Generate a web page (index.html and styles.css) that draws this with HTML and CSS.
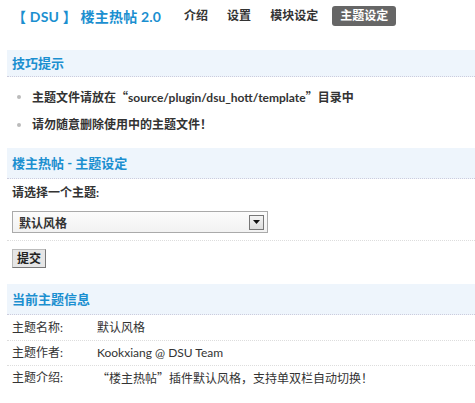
FILE: index.html
```html
<!DOCTYPE html>
<html lang="zh">
<head>
<meta charset="utf-8">
<link rel="stylesheet" href="styles.css">
</head>
<body>
<div class="top">
  <h1 class="brand">【 DSU 】 楼主热帖 2.0</h1>
  <nav class="nav">
    <a class="nav-item first">介绍</a>
    <a class="nav-item">设置</a>
    <a class="nav-item">模块设定</a>
    <a class="nav-item active">主题设定</a>
  </nav>
</div>

<div class="section">
  <div class="sec-head">技巧提示</div>
  <ul class="tips">
    <li>主题文件请放在<span class="q">“</span>source/plugin/dsu_hott/template<span class="q">”</span>目录中</li>
    <li>请勿随意删除使用中的主题文件！</li>
  </ul>
</div>

<div class="section">
  <div class="sec-head head2">楼主热帖 - 主题设定</div>
  <div class="label">请选择一个主题:</div>
  <div class="select-row">
    <div class="select">
      <span class="select-text">默认风格</span>
      <span class="select-btn"><svg width="7" height="4" viewBox="0 0 7 4"><path d="M0 0h7L3.5 4z" fill="#111"/></svg></span>
    </div>
  </div>
  <div class="submit-row"><button class="submit">提交</button></div>
</div>

<div class="section info">
  <div class="sec-head head3">当前主题信息</div>
  <div class="row first"><span class="k">主题名称:</span><span class="v">默认风格</span></div>
  <div class="row"><span class="k">主题作者:</span><span class="v">Kookxiang @ DSU Team</span></div>
  <div class="row last"><span class="k">主题介绍:</span><span class="v"><span class="q">“</span>楼主热帖<span class="q">”</span>插件默认风格，支持单双栏自动切换！</span></div>
</div>
</body>
</html>
```
FILE: styles.css
```css
html, body { margin: 0; padding: 0; background: #fff; }
body {
  font-family: "Lato", "Noto Sans CJK SC", sans-serif;
  font-size: 12px;
  color: #333;
  width: 475px;
  overflow: hidden;
}
.q { font-family: "Noto Sans CJK SC", sans-serif; }
.top {
  display: flex;
  align-items: center;
  height: 32px;
  padding-left: 12px;
}
.brand {
  margin: 0;
  font-size: 14px;
  font-weight: bold;
  color: #1b8fd0;
  letter-spacing: 0.2px;
  white-space: nowrap;
}
.nav { display: flex; align-items: center; margin-left: 17px; }
.nav-item {
  font-weight: bold;
  font-size: 12px;
  color: #333;
  padding: 3px 6px;
  margin-left: 7px;
  line-height: 14px;
}
.nav-item.first { margin-left: 0; }
.nav-item.active {
  background: #666;
  color: #fff;
  border-radius: 3px;
  padding: 3px 8px;
  margin-left: 8px;
}
.section { margin-left: 7px; }
.sec-head {
  background: #eef5fc;
  color: #1b8fd0;
  font-weight: bold;
  font-size: 13px;
  height: 26px;
  line-height: 26px;
  padding-left: 5px;
  border-bottom: 1px dotted #ccd;
  margin-top: 18px;
}
.tips {
  list-style: none;
  margin: 0;
  padding: 7px 0 0 0;
}
.tips li {
  position: relative;
  padding-left: 25px;
  height: 28px;
  line-height: 26px;
  font-weight: bold;
}
.tips li::before {
  content: "";
  position: absolute;
  left: 10px;
  top: 11px;
  width: 4px;
  height: 4px;
  border-radius: 50%;
  background: #bbb;
}
.sec-head.head2 { margin-top: 8px; height: 30px; line-height: 30px; }
.label {
  font-weight: bold;
  padding-left: 5px;
  height: 28px;
  line-height: 28px;
}
.select-row {
  padding: 4px 0 7px 5px;
  border-bottom: 1px dotted #ddd;
}
.select {
  width: 254px;
  height: 20px;
  border: 1px solid #aaa;
  background: linear-gradient(#fcfcfc, #f2f2f2);
  display: flex;
  align-items: center;
  justify-content: space-between;
}
.select-text { padding-left: 6px; font-weight: bold; }
.select-btn {
  width: 13px;
  height: 13px;
  border: 1px solid #777;
  margin-right: 3px;
  background: linear-gradient(#f4f4f4, #ddd);
  display: flex;
  align-items: center;
  justify-content: center;
}
.submit-row { padding: 8px 0 0 5px; }
.submit {
  font-family: inherit;
  font-size: 12px;
  font-weight: bold;
  color: #222;
  background: #e6e6e6;
  border: 1px solid #888;
  border-color: #bbb #777 #777 #bbb;
  padding: 0 4px;
  height: 19px;
  line-height: 17px;
  display: block;
}
.info .head3 { margin-top: 16px; height: 30px; line-height: 30px; }
.row {
  display: flex;
  height: 24px;
  line-height: 24px;
  border-bottom: 1px dotted #ddd;
  padding-left: 5px;
}
.row.first { height: 25px; line-height: 25px; }
.row.last { border-bottom: none; }
.k { width: 85px; flex: none; }
```
